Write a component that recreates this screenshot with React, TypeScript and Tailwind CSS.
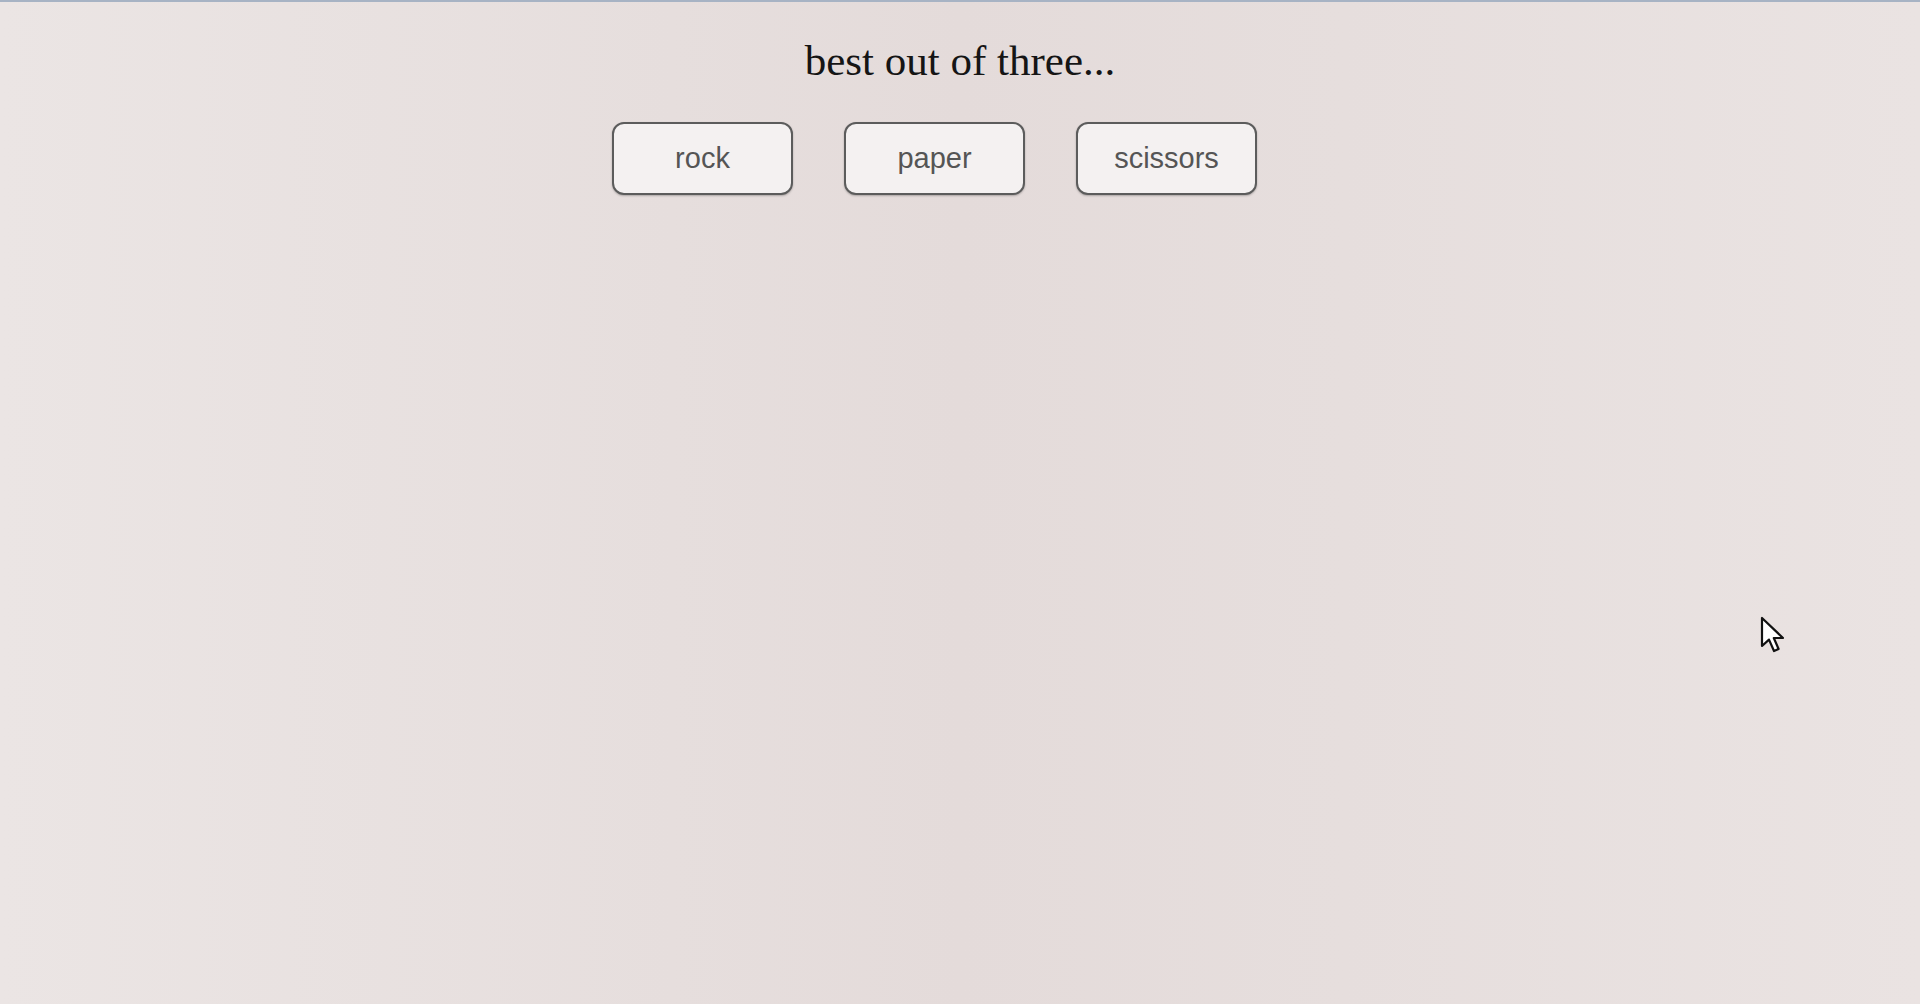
import React from "react";

export default function App() {
  const items = ["rock", "paper", "scissors"];
  return (
    <div className="relative w-[1920px] h-[1004px] overflow-hidden bg-[#e7dfde] border-t-2 border-[#a7b3c4]">
      <div className="absolute inset-0 bg-[linear-gradient(90deg,#ebe5e4_0%,#e6dedd_35%,#e4dbda_50%,#e6dedd_70%,#eae3e2_100%)]" />
      <div className="relative flex flex-col items-center">
        <h1
          className="mt-[34px] text-[43px] leading-[50px] text-[#151515]"
          style={{ fontFamily: '"Liberation Serif", "Times New Roman", serif' }}
        >
          best out of three...
        </h1>
        <div className="mt-[36px] flex justify-center">
          {items.map((t) => (
            <button
              key={t}
              className="mr-[51px] w-[181px] h-[73px] rounded-[12px] border-2 border-[#5c5c5c] bg-[#f4f1f1] text-[29px] text-[#555] shadow-[0_1px_2px_rgba(0,0,0,0.25)]"
              style={{ fontFamily: '"Liberation Sans", Arial, sans-serif' }}
            >
              {t}
            </button>
          ))}
        </div>
      </div>
      <svg
        className="absolute left-[1760px] top-[614px]"
        width="26"
        height="38"
        viewBox="0 0 13 19"
      >
        <path
          d="M1 1 L1 15 L4.5 11.8 L7 17.5 L9.3 16.5 L6.9 11 L11.5 11 Z"
          fill="#fff"
          stroke="#111"
          strokeWidth="1.1"
          strokeLinejoin="round"
        />
      </svg>
    </div>
  );
}
